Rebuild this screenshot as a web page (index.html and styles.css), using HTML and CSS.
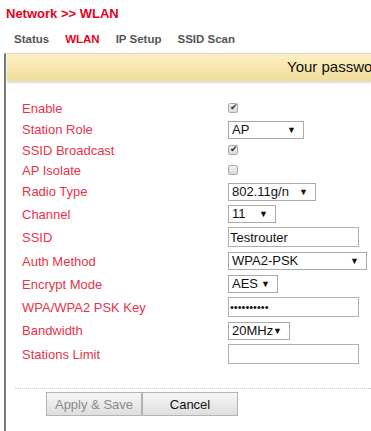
FILE: index.html
```
<!DOCTYPE html>
<html lang="en">
<head>
    <meta charset="UTF-8">
    <meta name="viewport" content="width=device-width, initial-scale=1.0">
    <title>WLAN</title>
    <link rel="stylesheet" href="styles.css">
</head>
<body>
    <h1 class="title">Network &gt;&gt; WLAN</h1>
    <nav class="tabs">
        <a class="tab">Status</a>
        <a class="tab active">WLAN</a>
        <a class="tab">IP Setup</a>
        <a class="tab">SSID Scan</a>
    </nav>
    <div class="panel">
        <div class="banner">Your password has not been changed from the default</div>
        <form class="form">
            <div class="row row-chk">
                <label class="lbl">Enable</label>
                <input type="checkbox" class="chk" checked>
            </div>
            <div class="row">
                <label class="lbl">Station Role</label>
                <span class="sel w75">AP</span>
            </div>
            <div class="row row-chk">
                <label class="lbl">SSID Broadcast</label>
                <input type="checkbox" class="chk" checked>
            </div>
            <div class="row row-chk">
                <label class="lbl">AP Isolate</label>
                <input type="checkbox" class="chk">
            </div>
            <div class="row row-tall">
                <label class="lbl">Radio Type</label>
                <span class="sel w87">802.11g/n</span>
            </div>
            <div class="row row-mid">
                <label class="lbl">Channel</label>
                <span class="sel w47">11</span>
            </div>
            <div class="row row-txt">
                <label class="lbl">SSID</label>
                <input type="text" class="txt" value="Testrouter">
            </div>
            <div class="row row-txt">
                <label class="lbl">Auth Method</label>
                <span class="sel w138">WPA2-PSK</span>
            </div>
            <div class="row row-mid">
                <label class="lbl">Encrypt Mode</label>
                <span class="sel w49">AES</span>
            </div>
            <div class="row row-txt">
                <label class="lbl">WPA/WPA2 PSK Key</label>
                <input type="password" class="txt" value="1234567890">
            </div>
            <div class="row row-tall">
                <label class="lbl">Bandwidth</label>
                <span class="sel w61">20MHz</span>
            </div>
            <div class="row row-txt">
                <label class="lbl">Stations Limit</label>
                <input type="text" class="txt">
            </div>
        </form>
        <div class="actions">
            <button class="btn" disabled>Apply &amp; Save</button>
            <button class="btn">Cancel</button>
        </div>
    </div>
</body>
</html>
```
FILE: styles.css
```
body{
    margin: 0;
    font-family: "Liberation Sans", Arial, sans-serif;
    background-color: white;
    overflow: hidden;
}

.title{
    margin: 0;
    padding: 6px 0 0 6px;
    font-size: 13px;
    line-height: 16px;
    font-weight: bold;
    color: #e8001c;
}

.tabs{
    display: flex;
    gap: 16px;
    margin-top: 10px;
    padding-left: 14px;
    height: 15px;
    line-height: 15px;
}
.tab{
    font-size: 11.5px;
    font-weight: bold;
    color: #555;
}
.tab.active{
    color: #e8001c;
}

.panel{
    margin-top: 6px;
    margin-left: 4px;
    border-left: 2px solid #7a7a7a;
    border-top: 1px solid #d8d8d8;
    height: 377px;
}

.banner{
    margin-left: 1px;
    height: 27px;
    line-height: 25px;
    padding-left: 280px;
    font-size: 15px;
    color: #111;
    white-space: nowrap;
    overflow: hidden;
    background: linear-gradient(#fcefc2, #f1de9c);
    box-shadow: 0 2px 2px rgba(0,0,0,0.15);
}

.form{
    margin-top: 16px;
    padding-left: 16px;
}

.row{
    display: flex;
    align-items: center;
    height: 21px;
}
.row-chk{ height: 20px; }
.row-mid{ height: 22px; }
.row-tall{ height: 23px; }
.row-txt{ height: 24px; }
.row:first-child{ height: 22px; }

.lbl{
    width: 206px;
    font-size: 13px;
    color: #e8334a;
}

.chk{
    appearance: none;
    -webkit-appearance: none;
    margin: 0;
    width: 10px;
    height: 10px;
    border: 1px solid #aaa;
    border-radius: 2px;
    background: linear-gradient(#f0f0f0, #dcdcdc);
    position: relative;
}
.chk:checked::after{
    content: "\2714";
    position: absolute;
    left: 1px;
    top: -2px;
    font-size: 9px;
    color: #333;
}

.sel{
    position: relative;
    box-sizing: border-box;
    height: 18px;
    line-height: 16px;
    padding-left: 3px;
    border: 1px solid #aaa;
    background: white;
    font-size: 13px;
    color: #111;
}
.sel::after{
    content: "\25BC";
    position: absolute;
    right: 7px;
    top: 0;
    font-size: 9px;
    color: #111;
}
.w75{ width: 76px; }
.w87{ width: 88px; }
.w47{ width: 48px; }
.w138{ width: 139px; }
.w49{ width: 50px; }
.w61{ width: 62px; }

.txt{
    box-sizing: border-box;
    width: 131px;
    height: 20px;
    margin: 0;
    padding: 0 1px;
    border: 1px solid #b0b0b0;
    font-family: "Liberation Sans", Arial, sans-serif;
    font-size: 13px;
    color: #111;
}
.txt[type="password"]{
    font-size: 11px;
}

.actions{
    margin-top: 22px;
    margin-left: 9px;
    border-top: 1px dotted #ccc;
    padding: 3px 0 0 31px;
    display: flex;
}

.btn{
    width: 96px;
    height: 24px;
    margin: 0;
    border: 1px solid #b4b4b4;
    background: linear-gradient(#f6f6f6, #dedede);
    font-family: "Liberation Sans", Arial, sans-serif;
    font-size: 13px;
    color: #111;
}
.btn:disabled{
    color: #8a8a8a;
}
```
